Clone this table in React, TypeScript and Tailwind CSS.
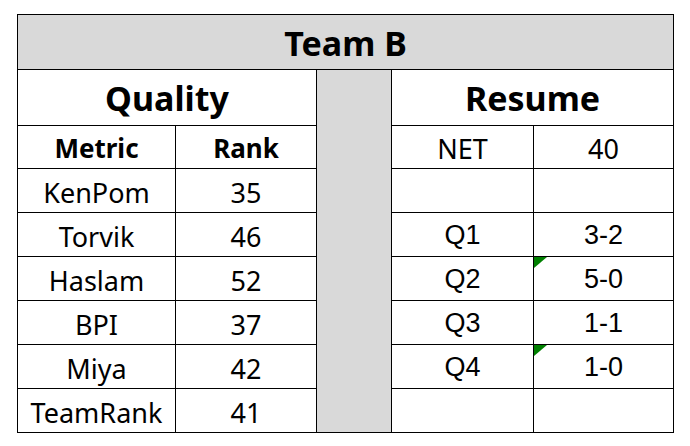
import React from 'react';

const aptos = { fontFamily: '"Noto Sans", "Open Sans", sans-serif' };
const arial = { fontFamily: '"Liberation Sans", Arial, sans-serif' };

type Row = { metric: string; rank: string; label: string; value: string; flag?: boolean };

const rows: Row[] = [
  { metric: 'KenPom', rank: '35', label: '', value: '' },
  { metric: 'Torvik', rank: '46', label: 'Q1', value: '3-2' },
  { metric: 'Haslam', rank: '52', label: 'Q2', value: '5-0', flag: true },
  { metric: 'BPI', rank: '37', label: 'Q3', value: '1-1' },
  { metric: 'Miya', rank: '42', label: 'Q4', value: '1-0', flag: true },
  { metric: 'TeamRank', rank: '41', label: '', value: '' },
];

function Flag() {
  return (
    <svg className="absolute left-0 top-0" width="13" height="11" viewBox="0 0 13 11">
      <polygon points="0,0 13,0 0,11" fill="#008000" />
    </svg>
  );
}

export default function App() {
  return (
    <div className="w-[690px] h-[446px] bg-white pt-[14px] pl-[17px]">
      <table className="table-fixed border-collapse text-black" style={aptos}>
        <colgroup>
          <col className="w-[158px]" />
          <col className="w-[141px]" />
          <col className="w-[75px]" />
          <col className="w-[142px]" />
          <col className="w-[140px]" />
        </colgroup>
        <tbody>
          <tr className="h-[55px]">
            <td colSpan={5} className="border border-black bg-[#d9d9d9] text-center align-bottom pb-[9px] text-[34px] font-bold leading-none">
              Team B
            </td>
          </tr>
          <tr className="h-[56px]">
            <td colSpan={2} className="border border-black text-center align-bottom pb-[10px] text-[34px] font-bold leading-none">
              Quality
            </td>
            <td rowSpan={8} className="border border-black bg-[#d9d9d9]" />
            <td colSpan={2} className="border border-black text-center align-bottom pb-[10px] text-[34px] font-bold leading-none">
              Resume
            </td>
          </tr>
          <tr className="h-[43px]">
            <td className="border border-black text-center align-bottom pb-[7px] text-[26px] font-bold leading-none">Metric</td>
            <td className="border border-black text-center align-bottom pb-[7px] text-[26px] font-bold leading-none">Rank</td>
            <td className="border border-black text-center align-bottom pb-[6px] text-[27px] leading-none">NET</td>
            <td className="border border-black text-center align-bottom pb-[6px] text-[27px] leading-none">40</td>
          </tr>
          {rows.map((r) => (
            <tr key={r.metric} className="h-[44px]">
              <td className="border border-black text-center align-bottom pb-[6px] text-[27px] leading-none">{r.metric}</td>
              <td className="border border-black text-center align-bottom pb-[6px] text-[27px] leading-none">{r.rank}</td>
              <td className="border border-black text-center align-bottom pb-[7px] text-[27px] leading-none" style={arial}>
                {r.label}
              </td>
              <td className="relative border border-black text-center align-bottom pb-[7px] text-[27px] leading-none" style={arial}>
                {r.flag && <Flag />}
                {r.value}
              </td>
            </tr>
          ))}
        </tbody>
      </table>
    </div>
  );
}
